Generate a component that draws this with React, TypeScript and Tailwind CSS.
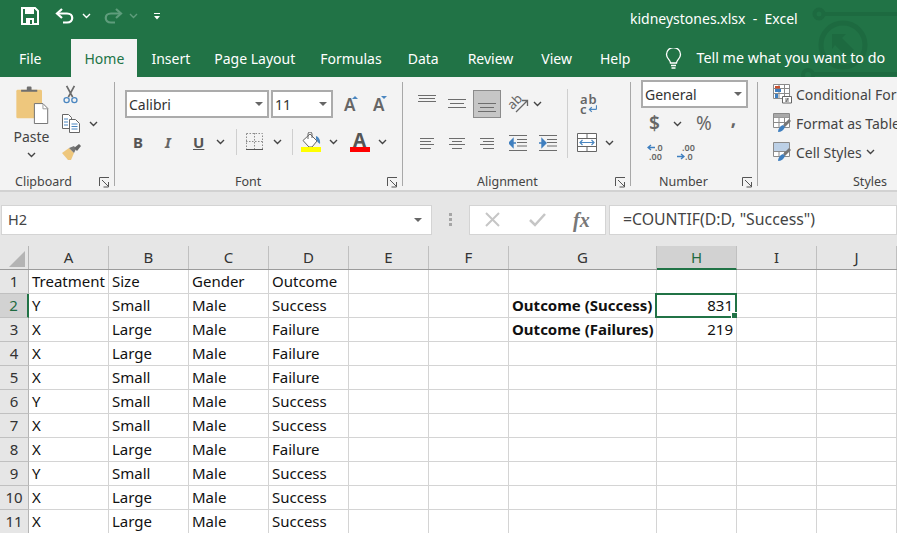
import type { ReactNode } from "react"

const FONT = "font-['Noto_Sans','Open_Sans',sans-serif]"

const Chevron = ({ className = "", color = "#444" }: { className?: string; color?: string }) => (
  <svg width="9" height="6" viewBox="0 0 9 6" className={`shrink-0 ${className}`}>
    <path d="M1 1l3.5 3.5L8 1" fill="none" stroke={color} strokeWidth="1.4" />
  </svg>
)

const Caret = ({ className = "" }: { className?: string }) => (
  <svg width="8" height="4" viewBox="0 0 8 4" className={className}>
    <path d="M0 0h8L4 4z" fill="#666" />
  </svg>
)

const Launcher = () => (
  <svg width="11" height="11" viewBox="0 0 11 11">
    <path d="M.5 9V.5H10M3 3l6 6M9.5 5v5h-5" fill="none" stroke="#555" strokeWidth="1" />
  </svg>
)

const Lines = ({ rows, color = "#6d6d6d" }: { rows: [number, number, number][]; color?: string }) => (
  <svg width="20" height="20" viewBox="0 0 20 20">
    {rows.map(([x1, x2, y]) => (
      <path key={y} d={`M${x1} ${y}.5H${x2}`} stroke={color} strokeWidth="1" />
    ))}
  </svg>
)

const Paste = () => (
  <svg width="35" height="38" viewBox="0 0 36 40">
    <rect x="1" y="4" width="27" height="30" rx="1.5" fill="#eec77d" />
    <path d="M6 6V4h6V1.500a1 1 0 0 1 1-1h3a1 1 0 0 1 1 1V4h6v2z" fill="#6f6f6f" />
    <path d="M20 18.500h9l5 5v16H20z" fill="#fff" stroke="#6f6f6f" />
    <path d="M29 19v5h5" fill="none" stroke="#9a9a9a" />
  </svg>
)

const Scissors = () => (
  <svg width="17" height="19" viewBox="0 0 17 22">
    <path d="M4 1l7 13M13 1L6 14" stroke="#6b6b6b" strokeWidth="2" />
    <circle cx="4" cy="17.500" r="3" fill="none" stroke="#4a86c0" strokeWidth="1.500" />
    <circle cx="13" cy="17.500" r="3" fill="none" stroke="#4a86c0" strokeWidth="1.500" />
  </svg>
)

const Copy = () => (
  <svg width="18" height="19" viewBox="0 0 18 19">
    <path d="M.5.500h6l3 3v11H.5z" fill="#fff" stroke="#666" />
    <path d="M7.500 5.500h6l4 4v9h-10z" fill="#fff" stroke="#666" />
    <path d="M2 5h4M2 8h4M2 11h4M9.500 10h6M9.500 12.500h6M9.500 15h6" stroke="#4a86c0" />
  </svg>
)

const Brush = () => (
  <svg width="19" height="16" viewBox="0 0 19 16">
    <path d="M0 9l7-5 5 5-3 7H6z" fill="#eec77d" />
    <path d="M7 4l5-2 2 3-2 4z" fill="#777" />
    <path d="M12 4l5-4 2 2-4 5z" fill="#666" />
  </svg>
)

const GrowA = ({ down }: { down?: boolean }) => (
  <svg width="18" height="16" viewBox="0 0 18 16" className="overflow-visible">
    <text x="0" y="15" fontSize="17" fontWeight="600" fill="#666" fontFamily="Noto Sans">A</text>
    <path d={down ? "M8 0h6l-3 3z" : "M8 3h6l-3-3z"} fill="#4a86c0" />
  </svg>
)

const Borders = () => (
  <svg width="18" height="18" viewBox="0 0 18 18">
    <path d="M.5.500h16v16M.5.500v16M8.500 0v17M0 8.500h17" fill="none" stroke="#8c8c8c" strokeDasharray="1.500 1.500" />
    <path d="M0 16.500h17" stroke="#555" />
  </svg>
)

const Fill = () => (
  <svg width="20" height="20" viewBox="0 0 20 20">
    <path d="M2 8.500L9 2l7 7-5 6H8z" fill="#fff" stroke="#666" />
    <path d="M7 7V2a2 2 0 0 1 4 0v4" fill="none" stroke="#666" />
    <path d="M15 4c3 1 4.500 4 4 8-2-1-3-3-4-5z" fill="#4a86c0" />
    <rect x="0" y="15" width="20" height="5" fill="#ffff00" />
  </svg>
)

const FontColor = () => (
  <svg width="20" height="20" viewBox="0 0 20 20" className="overflow-visible">
    <text x="3" y="15" fontSize="19" fontWeight="700" fill="#555" fontFamily="Noto Sans">A</text>
    <rect x="0" y="15" width="20" height="5" fill="#ff0000" />
  </svg>
)

const Orientation = () => (
  <svg width="20" height="20" viewBox="0 0 20 20" className="overflow-visible">
    <text x="7" y="12" textAnchor="middle" fontSize="13" fill="#666" fontFamily="Noto Sans" transform="rotate(-45 7 8)">ab</text>
    <path d="M8 18L19 7M14 6.500h5.500V12" fill="none" stroke="#666" strokeWidth="1.300" />
  </svg>
)

const IndentIcon = ({ flip }: { flip?: boolean }) => (
  <svg width="18" height="16" viewBox="0 0 18 16">
    <path d="M0 .500h18M8 4.500h10M8 7.500h10M8 11h10M0 15.500h18" stroke="#6d6d6d" />
    <path d={flip ? "M0 8h4M3 4l4 4-4 4z" : "M7 8H4M4 4L0 8l4 4z"} fill="#3f7fbf" stroke="#3f7fbf" strokeWidth="1.400" />
  </svg>
)

const WrapText = () => (
  <div className="flex flex-col w-[20px] pl-[3px] text-[#666] text-[13px] font-semibold leading-[10px]">
    <span className="tracking-[1px]">ab</span>
    <span className="flex items-center gap-[1px]">
      c
      <svg width="10" height="8" viewBox="0 0 10 8">
        <path d="M9 0v3.500a1 1 0 0 1-1 1H2M4 2L1.500 4.500 4 7" fill="none" stroke="#4a86c0" strokeWidth="1.300" />
      </svg>
    </span>
  </div>
)

const Merge = () => (
  <svg width="20" height="19" viewBox="0 0 20 19">
    <path d="M.5.500h19v18H.5zM.5 5.500h19M.5 13.500h19M10 .5v5M10 13.500v5" fill="#fff" stroke="#666" />
    <path d="M3 9.500h14M5.500 7L3 9.500 5.500 12M14.500 7L17 9.500 14.500 12" fill="none" stroke="#4a86c0" strokeWidth="1.200" />
  </svg>
)

const Decimal = ({ more }: { more?: boolean }) => (
  <div className="flex flex-col text-[9px] leading-[9px] text-[#666] font-semibold w-[16px]">
    {more ? (
      <>
        <span className="flex items-center">
          <svg width="8" height="7" viewBox="0 0 8 7"><path d="M8 3.500H2M4 1L1 3.500 4 6" fill="none" stroke="#3f7fbf" strokeWidth="1.400" /></svg>
          .0
        </span>
        <span className="pl-[2px]">.00</span>
      </>
    ) : (
      <>
        <span className="pl-[5px]">.00</span>
        <span className="flex items-center">
          <svg width="8" height="7" viewBox="0 0 8 7"><path d="M0 3.500h6M4 1l3 2.500L4 6" fill="none" stroke="#3f7fbf" strokeWidth="1.400" /></svg>
          .0
        </span>
      </>
    )}
  </div>
)

const StyleIcon = ({ kind }: { kind: "cond" | "table" | "cell" }) => (
  <svg width="19" height="20" viewBox="0 0 19 20" className="shrink-0">
    <path d="M.5.500h16v14H.5zM.5 4.500h16M.5 9.500h16M6 .5v14M11.500.5v14" fill="#fff" stroke="#8a8a8a" />
    {kind === "cond" && (
      <>
        <path d="M2 2h5v2.500H2z" fill="#c8502f" />
        <path d="M2 5h6v3H2zM2 10h3v4H2z" fill="#3f7fbf" />
        <path d="M9.500 12.500h9v6.500h-9z" fill="#fff" stroke="#666" />
        <path d="M12 15h4M12 17h4M15 14l-2 4" stroke="#555" strokeWidth=".8" />
      </>
    )}
    {kind === "cell" && <path d="M1 1h15v8H1z" fill="#bcd0e6" />}
    {kind === "table" && <path d="M1 1h15v3.500H1z" fill="#a9a9a9" />}
    {kind !== "cond" && (
      <>
        <path d="M10 12l6-6 2 2-6 6z" fill="#777" />
        <path d="M5 19c0-3 2-6 5-7l2 2c-1 3-4 5-7 5z" fill="#3f7fbf" />
      </>
    )}
  </svg>
)

const Group = ({
  width,
  label,
  labelPad,
  launcher = true,
  divider = true,
  children,
}: {
  width: number | string
  label: string
  labelPad: string
  launcher?: boolean
  divider?: boolean
  children: ReactNode
}) => (
  <div
    className={`flex flex-col shrink-0 h-[104px] ${divider ? "border-r border-[#a8a8a8]" : ""}`}
    style={{ width }}
  >
    <div className="flex-1 min-h-0">{children}</div>
    <div className={`flex items-center justify-between h-[10px] pt-[2px] text-[12.500px] text-[#444] ${labelPad}`}>
      <span>{label}</span>
      {launcher && <Launcher />}
    </div>
  </div>
)

const Box = ({ text, className, pad = "pl-[2px]" }: { text: string; className: string; pad?: string }) => (
  <div className={`flex items-center justify-between h-[28px] bg-white border-2 border-[#ababab] pr-[4px] text-[14px] text-[#333] ${pad} ${className}`}>
    <span>{text}</span>
    <Caret />
  </div>
)

const COLS = ["A", "B", "C", "D", "E", "F", "G", "H", "I", "J"]
const WIDTHS = ["w-[80px]", "w-[80px]", "w-[80px]", "w-[80px]", "w-[80px]", "w-[80px]", "w-[148px]", "w-[80px]", "w-[80px]", "w-[80px]"]

const DATA = [
  ["Treatment", "Size", "Gender", "Outcome"],
  ["Y", "Small", "Male", "Success"],
  ["X", "Large", "Male", "Failure"],
  ["X", "Large", "Male", "Failure"],
  ["X", "Small", "Male", "Failure"],
  ["Y", "Small", "Male", "Success"],
  ["X", "Small", "Male", "Success"],
  ["X", "Large", "Male", "Failure"],
  ["Y", "Small", "Male", "Success"],
  ["X", "Large", "Male", "Success"],
  ["X", "Large", "Male", "Success"],
]

const TABS: [string, string][] = [
  ["Insert", "ml-[14px]"],
  ["Page Layout", "ml-[24px]"],
  ["Formulas", "ml-[25px]"],
  ["Data", "ml-[26px]"],
  ["Review", "ml-[29px]"],
  ["View", "ml-[28px]"],
  ["Help", "ml-[28px]"],
]

export default function App() {
  return (
    <div className={`w-[897px] h-[533px] overflow-hidden bg-white text-[#222] ${FONT}`}>
      {/* title bar and tabs */}
      <div className="relative h-[77px] bg-[#217346] text-white text-[14px] overflow-hidden">
        <svg width="100" height="78" viewBox="0 0 100 78" className="absolute right-0 top-0" fill="none" stroke="#1d6a40" strokeWidth="4">
          <circle cx="22" cy="14" r="4.500" />
          <path d="M27 14h73" />
          <circle cx="46" cy="45" r="22" strokeWidth="5" />
          <path d="M35 34h14l-4 4 12 12-7 7-12-12-3 4z" fill="#1d6a40" stroke="none" />
          <circle cx="11" cy="75" r="5" />
          <path d="M16 74h84" />
        </svg>
        <div className="relative flex items-center h-[39px] pb-[7px]">
          <svg width="18" height="18" viewBox="0 0 18 18" className="ml-[21px]">
            <path d="M1 1h13l3 3v13H1z" fill="none" stroke="#fff" strokeWidth="2" />
            <path d="M4 1h9v6H4z" fill="#fff" />
            <path d="M5 11h8v6H5z" fill="#fff" />
            <path d="M9 13h2v4H9z" fill="#217346" />
          </svg>
          <svg width="20" height="16" viewBox="0 0 20 16" className="ml-[16px]" fill="none" stroke="#fff" strokeWidth="2.200">
            <path d="M7 1L2 5.500 7 10" />
            <path d="M2.500 5.500H12c7 0 7 9 0 9H8" />
          </svg>
          <Chevron className="ml-[7px]" color="#fff" />
          <svg width="20" height="16" viewBox="0 0 20 16" className="ml-[12px]" fill="none" stroke="#5f9d7c" strokeWidth="2.200">
            <path d="M13 1l5 4.500L13 10" />
            <path d="M17.500 5.500H8c-7 0-7 9 0 9h4" />
          </svg>
          <Chevron className="ml-[6px]" color="#5f9d7c" />
          <svg width="6" height="7" viewBox="0 0 6 7" className="ml-[16px]">
            <path d="M0 .500h6" stroke="#fff" />
            <path d="M0 3h6L3 6.500z" fill="#fff" />
          </svg>
          <span className="ml-[470px] mt-[5px]">kidneystones.xlsx&nbsp; -&nbsp; Excel</span>
        </div>
        <div className="relative flex items-center h-[38px]">
          <span className="ml-[19px]">File</span>
          <div className="ml-[30px] w-[66px] h-[38px] bg-[#f3f3f3] text-[#217346] flex items-center justify-center">Home</div>
          {TABS.map(([t, m]) => (
            <span key={t} className={m}>{t}</span>
          ))}
          <svg width="17" height="21" viewBox="0 0 17 21" className="ml-[35px]" fill="none" stroke="#fff" strokeWidth="1.300">
            <path d="M5.500 15c0-3-4-4.500-4-8.500a7 7 0 0 1 14 0c0 4-4 5.500-4 8.500z" />
            <path d="M6 17.500h5M6.500 20h4" />
          </svg>
          <span className="ml-[14px] text-[14.300px] whitespace-nowrap">Tell me what you want to do</span>
        </div>
      </div>

      {/* ribbon */}
      <div className="flex items-start h-[115px] pt-[5px] bg-[#f3f3f3] border-b-2 border-[#d2d2d2] overflow-hidden text-[14px] text-[#444]">
        <Group width={115} label="Clipboard" labelPad="pl-[15px] pr-[4px]">
          <div className="flex">
            <div className="flex flex-col items-center w-[62px] pl-[1px]">
              <div className="mt-[4px] ml-[2px] h-[38px]"><Paste /></div>
              <span className="mt-[3px] text-[14px] leading-[20px]">Paste</span>
              <Chevron className="mt-[5px]" />
            </div>
            <div className="flex flex-col pt-[3px]">
              <Scissors />
              <div className="flex items-center mt-[10px]">
                <Copy />
                <Chevron className="ml-[9px]" />
              </div>
              <div className="mt-[11px]"><Brush /></div>
            </div>
          </div>
        </Group>

        <Group width={288} label="Font" labelPad="pl-[120px] pr-[4px]">
          <div className="flex items-center pl-[10px] pt-[8px]">
            <Box text="Calibri" className="w-[144px]" />
            <Box text="11" className="w-[62px] ml-[2px]" />
            <div className="ml-[11px]"><GrowA /></div>
            <div className="ml-[11px]"><GrowA down /></div>
          </div>
          <div className="flex items-center pl-[18px] mt-[11px] h-[26px]">
            <span className="w-[10px] text-[15px] font-bold text-[#555]">B</span>
            <span className="ml-[22px] w-[8px] text-[15px] font-bold italic text-[#666]">I</span>
            <span className="ml-[20px] w-[12px] text-[15px] font-bold text-[#555] underline">U</span>
            <Chevron className="ml-[11px]" />
            <div className="ml-[11px] w-px h-[26px] bg-[#cfcfcf]" />
            <div className="ml-[9px]"><Borders /></div>
            <Chevron className="ml-[9px]" />
            <div className="ml-[10px] w-px h-[26px] bg-[#cfcfcf]" />
            <div className="ml-[8px]"><Fill /></div>
            <Chevron className="ml-[8px]" />
            <div className="ml-[12px]"><FontColor /></div>
            <Chevron className="ml-[8px]" />
          </div>
        </Group>

        <Group width={228} label="Alignment" labelPad="pl-[74px] pr-[4px]">
          <div className="flex">
            <div className="w-[165px]">
              <div className="flex items-center pl-[14px] pt-[8px]">
                <Lines rows={[[1, 19, 1], [2, 18, 4], [1, 19, 7]]} />
                <div className="ml-[10px]"><Lines rows={[[1, 19, 5], [3, 17, 9], [1, 19, 13]]} /></div>
                <div className="ml-[6px] w-[28px] h-[28px] bg-[#c6c6c6] border border-[#8b8b8b] flex items-center justify-center">
                  <Lines rows={[[1, 19, 9], [3, 17, 13], [1, 19, 17]]} />
                </div>
                <div className="ml-[7px]"><Orientation /></div>
                <Chevron className="ml-[5px]" />
              </div>
              <div className="flex items-center pl-[14px] mt-[15px]">
                <Lines rows={[[3, 17, 5], [3, 14, 8], [3, 17, 11], [3, 14, 15]]} />
                <div className="ml-[9px]"><Lines rows={[[3, 19, 5], [6, 16, 8], [3, 19, 11], [6, 16, 15]]} /></div>
                <div className="ml-[10px]"><Lines rows={[[4, 18, 5], [7, 18, 8], [4, 18, 11], [7, 18, 15]]} /></div>
                <div className="ml-[13px]"><IndentIcon /></div>
                <div className="ml-[12px]"><IndentIcon flip /></div>
              </div>
            </div>
            <div className="ml-[-1px] w-px h-[69px] mt-[7px] bg-[#cfcfcf]" />
            <div className="pl-[9px]">
              <div className="mt-[8px] h-[28px] flex items-center"><WrapText /></div>
              <div className="flex items-center mt-[15px]">
                <Merge />
                <Chevron className="ml-[8px]" />
              </div>
            </div>
          </div>
        </Group>

        <Group width={127} label="Number" labelPad="pl-[28px] pr-[4px]">
          <div className="pl-[10px] -mt-[2px]">
            <Box text="General" className="w-[107px]" />
            <div className="flex items-center mt-[1px] h-[29px] text-[#666]">
              <span className="ml-[8px] w-[12px] text-[19px] font-semibold">$</span>
              <Chevron className="ml-[12px]" />
              <span className="ml-[14px] text-[19px]">%</span>
              <span className="ml-[19px] text-[19px] font-bold -translate-y-[5px]">,</span>
            </div>
            <div className="flex items-center mt-[5px] pl-[6px]">
              <Decimal more />
              <div className="ml-[14px]"><Decimal /></div>
            </div>
          </div>
        </Group>

        <Group width={140} label="Styles" labelPad="pl-[95px]" launcher={false} divider={false}>
          <div className="flex flex-col pl-[15px] pt-[2px] gap-[9px] whitespace-nowrap">
            <div className="flex items-center gap-[4px] h-[20px]"><StyleIcon kind="cond" /><span>Conditional Formatting</span></div>
            <div className="flex items-center gap-[4px] h-[20px]"><StyleIcon kind="table" /><span>Format as Table</span></div>
            <div className="flex items-center gap-[4px] h-[20px]"><StyleIcon kind="cell" /><span>Cell Styles</span><Chevron /></div>
          </div>
        </Group>
      </div>

      {/* formula bar */}
      <div className="flex items-center h-[54px] pt-[1px] bg-[#e6e6e6] text-[14.500px] text-[#444]">
        <div className="flex items-center justify-between w-[431px] h-[30px] ml-[1px] pl-[6px] pr-[9px] bg-white border border-[#d4d4d4]">
          <span>H2</span>
          <Caret />
        </div>
        <div className="flex flex-col gap-[2px] ml-[17px] w-[3px]">
          <span className="w-[3px] h-[3px] bg-[#a6a6a6]" />
          <span className="w-[3px] h-[3px] bg-[#a6a6a6]" />
          <span className="w-[3px] h-[3px] bg-[#a6a6a6]" />
        </div>
        <div className="flex items-center w-[137px] h-[30px] ml-[17px] pl-[15px] bg-white border border-[#d4d4d4]">
          <svg width="15" height="15" viewBox="0 0 15 15" fill="none" stroke="#c6c6c6" strokeWidth="2"><path d="M1 1l13 13M14 1L1 14" /></svg>
          <svg width="17" height="15" viewBox="0 0 17 15" fill="none" stroke="#c6c6c6" strokeWidth="2.500" className="ml-[29px]"><path d="M1 8l5 5L16 2" /></svg>
          <span className="ml-[27px] text-[20px] text-[#777] italic font-['Liberation_Serif',serif] font-bold">fx</span>
        </div>
        <div className="flex items-center flex-1 h-[30px] ml-[3px] pl-[13px] bg-white border border-[#d4d4d4] text-[15.800px]">
          =COUNTIF(D:D, "Success")
        </div>
      </div>

      {/* sheet */}
      <div className="text-[15px] text-[#111]">
        <div className="flex h-[24px] bg-[#e6e6e6] border-b border-[#9b9b9b] text-[#333]">
          <div className="flex items-end justify-end w-[29px] pr-[3px] pb-[2px] border-r border-[#b5b5b5]">
            <svg width="16" height="16" viewBox="0 0 16 16"><path d="M16 0v16H0z" fill="#b4b4b4" /></svg>
          </div>
          {COLS.map((c, i) => (
            <div
              key={c}
              className={`flex items-center justify-center shrink-0 border-r ${WIDTHS[i]} ${c === "H" ? "bg-[#d2d2d2] text-[#1f6b41] border-[#c0c0c0] border-b-2 border-b-[#217346] h-[24px]" : "border-[#c0c0c0]"}`}
            >
              {c}
            </div>
          ))}
        </div>
        {DATA.map((row, r) => (
          <div key={r} className="flex h-[24px]">
            <div
              className={`flex items-center justify-center w-[29px] shrink-0 border-b ${r === 1 ? "bg-[#d2d2d2] text-[#1f6b41] border-[#c0c0c0] border-r-2 border-r-[#217346]" : "bg-[#e6e6e6] text-[#333] border-[#c0c0c0] border-r border-r-[#b5b5b5]"}`}
            >
              {r + 1}
            </div>
            {COLS.map((c, i) => {
              let text = row[i] ?? ""
              let cls = "pl-[3px]"
              if (c === "G" && r === 1) { text = "Outcome (Success)"; cls = "pl-[3px] font-bold" }
              if (c === "G" && r === 2) { text = "Outcome (Failures)"; cls = "pl-[3px] font-bold" }
              if (c === "H" && r === 1) { text = "831"; cls = "justify-end pr-[3px]" }
              if (c === "H" && r === 2) { text = "219"; cls = "justify-end pr-[3px]" }
              return (
                <div key={c} className={`relative flex items-center shrink-0 whitespace-nowrap border-r border-b border-[#d4d4d4] ${WIDTHS[i]} ${cls}`}>
                  {text}
                  {c === "H" && r === 1 && (
                    <div className="absolute -left-[2px] -top-[1px] -right-[1px] -bottom-[1px] border-2 border-[#217346]">
                      <div className="absolute -right-[3px] -bottom-[3px] w-[5px] h-[5px] bg-[#217346] border border-white box-content" />
                    </div>
                  )}
                </div>
              )
            })}
          </div>
        ))}
      </div>
    </div>
  )
}
